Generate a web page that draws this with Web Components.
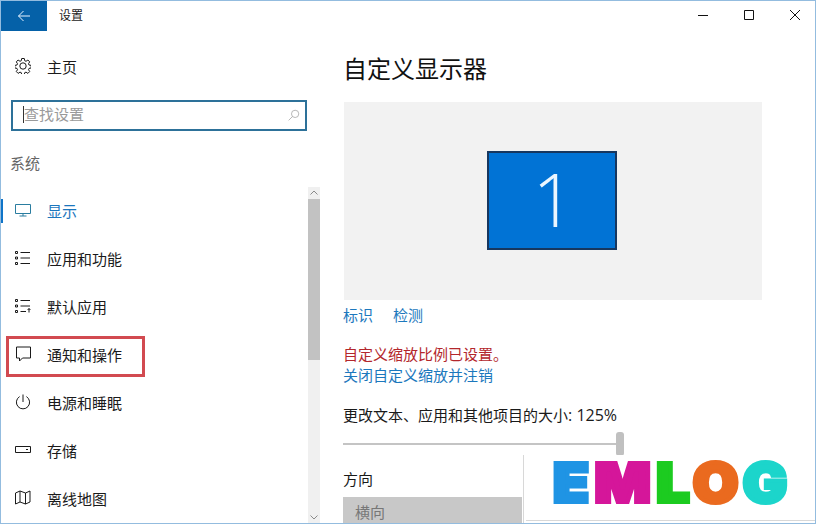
<!DOCTYPE html>
<html lang="zh">
<head>
<meta charset="utf-8">
<title>设置</title>
<style>
    html, body { margin: 0; background: #fff; }
    body {
        font-family: "Open Sans", "Noto Sans CJK SC", sans-serif;
        font-size: 15px;
        color: #1a1a1a;
    }
</style>
</head>
<body>
<settings-window>
    <title-bar slot="top">设置</title-bar>
    <settings-sidebar slot="side">
        <nav-item icon="monitor" selected>显示</nav-item>
        <nav-item icon="apps">应用和功能</nav-item>
        <nav-item icon="defaults">默认应用</nav-item>
        <nav-item icon="notify" marked>通知和操作</nav-item>
        <nav-item icon="power">电源和睡眠</nav-item>
        <nav-item icon="storage">存储</nav-item>
        <nav-item icon="map">离线地图</nav-item>
    </settings-sidebar>
    <display-page slot="main"></display-page>
    <logo-stamp slot="over"></logo-stamp>
</settings-window>

<script>
const icons = {
    back: '<path d="M14 8H2.500M7.500 3 2.500 8l5 5"/>',
    monitor: '<path d="M.5 2.500h15v9H.5zM8 11.500v2.500M4.500 14h7"/>',
    apps: '<path d="M.5 1.500h2v2h-2zM.5 7h2v2h-2zM.5 12.500h2v2h-2zM5.500 2.500H15M5.500 8H15M5.500 13.500H15"/>',
    defaults: '<path d="M.5 1.500h2v2h-2zM.5 7h2v2h-2zM.5 12.500h2v2h-2zM5.500 2.500H15M5.500 8H15M5.500 13.500H11M14 14.500V10.500M12.600 12 14 10.500 15.400 12"/>',
    notify: '<path d="M1.500 1h14v11H7.500L4.500 15v-3h-3z"/>',
    power: '<path d="M8 .5V8M4.600 2.600a6.600 6.600 0 1 0 6.800 0"/>',
    storage: '<path d="M.5 4.500h15v6H.5zM11 7.500h2"/>',
    map: '<path d="M.5 3 5 1l5.500 2L15 1v11l-4.500 2L5 12l-4.500 2zM5 1v11M10.500 3v11"/>',
    search: '<circle cx="10" cy="6" r="4.500"/><path d="M6.800 9.200 2 14"/>',
    gear: '<path d="M6.700.5h2.600l.4 2.200 1.300.6 1.900-1.300 1.800 1.900-1.200 1.800.5 1.300 2.200.4v2.600l-2.200.4-.5 1.300 1.200 1.800-1.800 1.900-1.900-1.300-1.300.6-.4 2.200H6.700l-.4-2.200-1.300-.6-1.900 1.300-1.800-1.900 1.200-1.800-.5-1.300-2.200-.4V7.400l2.200-.4.5-1.300L1.300 3.900 3.100 2l1.900 1.300 1.300-.6z"/><circle cx="8" cy="8" r="3.200"/>'
};

class UiIcon extends HTMLElement {
    constructor() {
        super();
        this.attachShadow({ mode: 'open' });
    }

    static get observedAttributes() {
        return ['name', 'size'];
    }

    attributeChangedCallback() {
        this.render();
    }

    connectedCallback() {
        this.render();
    }

    render() {
        const size = this.getAttribute('size') || 16;
        this.shadowRoot.innerHTML = `
            <style>
                :host { display: inline-flex; flex: none; width: ${size}px; height: ${size}px; }
                svg { display: block; fill: none; stroke: currentColor; stroke-width: 1; }
            </style>
            <svg width="${size}" height="${size}" viewBox="0 0 16 16">${icons[this.getAttribute('name')] || ''}</svg>
        `;
    }
}

const titleTemplate = document.createElement('template');
titleTemplate.innerHTML = `
    <style>
        :host {
            display: flex;
            align-items: center;
            height: 30px;
            flex: none;
            font-size: 12px;
        }
        .back {
            display: flex;
            align-items: center;
            justify-content: center;
            width: 46px;
            height: 30px;
            margin-right: 12px;
            background: #0561a8;
            color: #e8f4ff;
        }
        .label { flex: 1; padding-bottom: 2px; }
        .controls { display: flex; margin-right: -3px; }
        .controls svg {
            display: block;
            width: 46px;
            height: 30px;
            fill: none;
            stroke: #111;
            stroke-width: 1;
        }
    </style>
    <div class="back"><ui-icon name="back"></ui-icon></div>
    <div class="label"><slot></slot></div>
    <div class="controls">
        <svg viewBox="0 0 46 30"><path d="M18 14.500h10"/></svg>
        <svg viewBox="0 0 46 30"><path d="M18.500 9.500h9v9h-9z"/></svg>
        <svg viewBox="0 0 46 30"><path d="M18 9l10 10M28 9 18 19"/></svg>
    </div>
`;

class TitleBar extends HTMLElement {
    constructor() {
        super();
        this.attachShadow({ mode: 'open' }).append(titleTemplate.content.cloneNode(true));
    }
}

const itemTemplate = document.createElement('template');
itemTemplate.innerHTML = `
    <style>
        :host {
            display: flex;
            align-items: center;
            gap: 16px;
            position: relative;
            box-sizing: border-box;
            height: 48px;
            padding: 0 0 2px 14px;
            color: #1a1a1a;
        }
        :host([selected]) { color: #1b76bd; }
        :host([selected]) ui-icon { color: #2a7da0; }
        :host([selected])::before {
            content: "";
            position: absolute;
            left: 0;
            top: 12px;
            width: 2px;
            height: 24px;
            background: #0f74c8;
        }
        :host([marked])::after {
            content: "";
            position: absolute;
            left: 5px;
            top: 5px;
            width: 133px;
            height: 35px;
            border: 3px solid #d24a50;
        }
    </style>
    <ui-icon></ui-icon>
    <span><slot></slot></span>
`;

class NavItem extends HTMLElement {
    constructor() {
        super();
        this.attachShadow({ mode: 'open' }).append(itemTemplate.content.cloneNode(true));
    }

    connectedCallback() {
        this.shadowRoot.querySelector('ui-icon').setAttribute('name', this.getAttribute('icon'));
    }
}

const scrollTemplate = document.createElement('template');
scrollTemplate.innerHTML = `
    <style>
        :host {
            display: flex;
            flex-direction: column;
            flex: none;
            width: 12px;
            background: #f0f0f0;
            color: #8a8a8a;
        }
        svg { display: block; flex: none; fill: none; stroke: currentColor; }
        .thumb { height: 161px; flex: none; background: #c2c2c2; }
        .rest { flex: 1; }
    </style>
    <svg width="12" height="12" viewBox="0 0 12 12"><path d="M2.500 7.500 6 4l3.500 3.500"/></svg>
    <div class="thumb"></div>
    <div class="rest"></div>
    <svg width="12" height="12" viewBox="0 0 12 12"><path d="M2.500 4.500 6 8l3.500-3.500"/></svg>
`;

class ScrollRail extends HTMLElement {
    constructor() {
        super();
        this.attachShadow({ mode: 'open' }).append(scrollTemplate.content.cloneNode(true));
    }
}

const sidebarTemplate = document.createElement('template');
sidebarTemplate.innerHTML = `
    <style>
        :host {
            display: flex;
            flex-direction: column;
            flex: none;
            width: 322px;
            height: 100%;
            min-height: 0;
        }
        .home {
            display: flex;
            align-items: center;
            gap: 16px;
            box-sizing: border-box;
            height: 48px;
            margin-top: 12px;
            padding: 0 0 2px 14px;
            flex: none;
        }
        .search {
            display: flex;
            align-items: center;
            justify-content: space-between;
            box-sizing: border-box;
            width: 296px;
            height: 31px;
            margin: 9px 0 0 10px;
            padding: 0 5px 2px 10px;
            border: 2px solid #2d7199;
            color: #9a9a9a;
            flex: none;
        }
        .search span { border-left: 1px solid #333; line-height: 17px; }
        .search ui-icon { color: #a8a8a8; margin-top: 2px; }
        .group {
            height: 20px;
            margin: 22px 0 14px 9px;
            line-height: 20px;
            color: #666;
            flex: none;
        }
        .lower { display: flex; flex: 1; min-height: 0; padding-right: 3px; }
        .list { flex: 1; overflow: hidden; }
    </style>
    <div class="home"><ui-icon name="gear"></ui-icon><span>主页</span></div>
    <div class="search"><span>查找设置</span><ui-icon name="search" size="13"></ui-icon></div>
    <div class="group">系统</div>
    <div class="lower">
        <div class="list"><slot></slot></div>
        <scroll-rail></scroll-rail>
    </div>
`;

class SettingsSidebar extends HTMLElement {
    constructor() {
        super();
        this.attachShadow({ mode: 'open' }).append(sidebarTemplate.content.cloneNode(true));
    }
}

const pageTemplate = document.createElement('template');
pageTemplate.innerHTML = `
    <style>
        :host {
            display: block;
            flex: 1;
            padding-left: 20px;
            line-height: 20px;
            overflow: hidden;
        }
        h1 {
            margin: 20px 0 15px;
            font-size: 24px;
            font-weight: 400;
            line-height: 36px;
            color: #111;
        }
        .preview {
            display: flex;
            align-items: center;
            justify-content: center;
            width: 418px;
            height: 198px;
            margin-left: 1px;
            background: #f2f2f2;
        }
        .screen {
            display: flex;
            align-items: center;
            justify-content: center;
            box-sizing: border-box;
            width: 130px;
            height: 99px;
            margin: 0 2px 1px 0;
            padding: 0 0 3px 3px;
            border: 2px solid #17375f;
            background: #0173d5;
            color: #eaf6ff;
            font: 300 74px/1 "Open Sans", sans-serif;
        }
        .links { display: flex; gap: 20px; margin-top: 5px; }
        .link { color: #1c78bd; }
        .notes { margin-top: 19px; line-height: 21px; }
        .warn { color: #b3272c; }
        .size { margin-top: 19px; color: #1a1a1a; }
        .size i { font-style: normal; font-size: 16px; }
        .slider {
            display: flex;
            align-items: center;
            width: 281px;
            height: 24px;
            margin-top: 7px;
        }
        .track { width: 273px; height: 2px; background: #c4c4c4; }
        .knob { width: 8px; height: 24px; border-radius: 3px; background: #c0c0c0; }
        .label { margin-top: 13px; }
        .select {
            box-sizing: border-box;
            width: 179px;
            height: 40px;
            margin-top: 8px;
            padding: 5px 12px;
            background: #c8c8c8;
            color: #777;
        }
    </style>
    <h1>自定义显示器</h1>
    <div class="preview"><div class="screen">1</div></div>
    <div class="links"><span class="link">标识</span><span class="link">检测</span></div>
    <div class="notes">
        <div class="warn">自定义缩放比例已设置。</div>
        <div class="link">关闭自定义缩放并注销</div>
    </div>
    <div class="size">更改文本、应用和其他项目的大小<i>: 125%</i></div>
    <div class="slider"><div class="track"></div><div class="knob"></div></div>
    <div class="label">方向</div>
    <div class="select">横向</div>
`;

class DisplayPage extends HTMLElement {
    constructor() {
        super();
        this.attachShadow({ mode: 'open' }).append(pageTemplate.content.cloneNode(true));
    }
}

const logoTemplate = document.createElement('template');
logoTemplate.innerHTML = `
    <style>
        :host {
            display: flex;
            align-items: flex-start;
            position: absolute;
            right: -1px;
            bottom: -1px;
            box-sizing: border-box;
            width: 293px;
            height: 69px;
            padding: 0 0 0 29px;
            background: #fff;
            border-left: 1px solid #d8d8d8;
        }
        .word {
            display: flex;
            font: 900 54px/54px Inter, sans-serif;
            -webkit-text-stroke: 4px currentColor;
            margin-top: 1px;
            transform: scaleX(1.09);
            transform-origin: left center;
        }
        .word span { display: block; }
        .rule {
            position: absolute;
            left: 2px;
            right: 0;
            bottom: 3px;
            height: 1px;
            background: #d8d8d8;
        }
    </style>
    <div class="word">
        <span style="color:#1f94e4;margin-right:5px">E</span>
        <span style="color:#d5169a;margin-right:5px">M</span>
        <span style="color:#1ccb20;margin-right:3px">L</span>
        <span style="color:#ea6a1f;margin-right:4px">O</span>
        <span style="color:#1cd5cb">G</span>
    </div>
    <div class="rule"></div>
`;

class LogoStamp extends HTMLElement {
    constructor() {
        super();
        this.attachShadow({ mode: 'open' }).append(logoTemplate.content.cloneNode(true));
    }
}

const windowTemplate = document.createElement('template');
windowTemplate.innerHTML = `
    <style>
        :host {
            display: flex;
            flex-direction: column;
            position: relative;
            box-sizing: border-box;
            width: 816px;
            height: 524px;
            border: 1px solid #93bcdf;
            overflow: hidden;
            background: #fff;
        }
        .body { display: flex; flex: 1; min-height: 0; }
    </style>
    <slot name="top"></slot>
    <div class="body">
        <slot name="side"></slot>
        <slot name="main"></slot>
    </div>
    <slot name="over"></slot>
`;

class SettingsWindow extends HTMLElement {
    constructor() {
        super();
        this.attachShadow({ mode: 'open' }).append(windowTemplate.content.cloneNode(true));
    }
}

window.customElements.define('ui-icon', UiIcon);
window.customElements.define('title-bar', TitleBar);
window.customElements.define('nav-item', NavItem);
window.customElements.define('scroll-rail', ScrollRail);
window.customElements.define('settings-sidebar', SettingsSidebar);
window.customElements.define('display-page', DisplayPage);
window.customElements.define('logo-stamp', LogoStamp);
window.customElements.define('settings-window', SettingsWindow);
</script>
</body>
</html>
